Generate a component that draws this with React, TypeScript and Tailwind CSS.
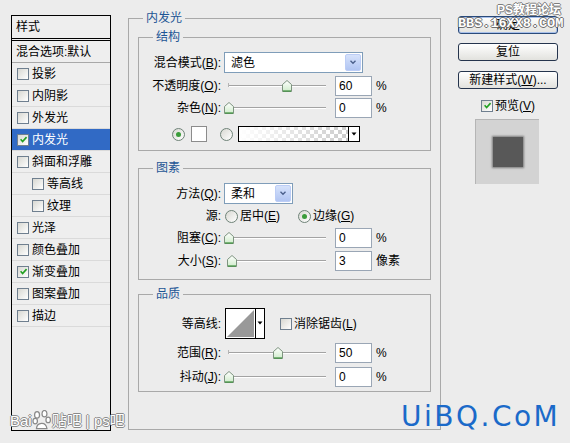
import { FC, ReactNode } from "react";

const ITEMS: { t: string; checked?: boolean; active?: boolean; indent?: boolean }[] = [
  { t: "投影" },
  { t: "内阴影" },
  { t: "外发光" },
  { t: "内发光", checked: true, active: true },
  { t: "斜面和浮雕" },
  { t: "等高线", indent: true },
  { t: "纹理", indent: true },
  { t: "光泽" },
  { t: "颜色叠加" },
  { t: "渐变叠加", checked: true },
  { t: "图案叠加" },
  { t: "描边" },
];

const Check: FC<{ checked?: boolean }> = ({ checked }) => (
  <span className="flex size-[12px] shrink-0 items-center justify-center border border-[#6f7f8f] bg-linear-to-br from-[#d8d8d2] to-white">
    {checked && (
      <svg viewBox="0 0 10 10" className="size-[9px]">
        <path d="M1.8 4.8 L4 7.2 L8.4 2.4" fill="none" stroke="#22a022" strokeWidth="1.8" />
      </svg>
    )}
  </span>
);

const Radio: FC<{ checked?: boolean }> = ({ checked }) => (
  <span className="flex size-[13px] shrink-0 items-center justify-center rounded-full border border-[#6f8378] bg-linear-to-br from-[#d8d8d2] to-white">
    {checked && <span className="size-[5px] rounded-full bg-[#3a9c3a]" />}
  </span>
);

const Chevron = () => (
  <span className="mr-px ml-auto flex h-[17px] w-[16px] items-center justify-center rounded-[2px] border border-[#bccdf6] bg-linear-to-b from-[#d6e2fb] to-[#b1c5f2]">
    <svg viewBox="0 0 8 6" className="h-[5px] w-[8px]">
      <path d="M1 1 L4 4 L7 1" fill="none" stroke="#4a5f8a" strokeWidth="1.6" />
    </svg>
  </span>
);

const Select: FC<{ text: string; w: string }> = ({ text, w }) => (
  <div className={`flex h-[21px] shrink-0 items-center border border-[#7f9db9] bg-white pl-[6px] ${w}`}>
    <span>{text}</span>
    <Chevron />
  </div>
);

const Slider: FC<{ value: number }> = ({ value }) => (
  <div className="relative h-[20px] w-[107px] shrink-0">
    <div className="absolute top-[9px] left-[5px] h-[2px] w-[97px] border-t border-b border-t-[#a3a3a3] border-b-white" />
    <div className="absolute top-[7px] left-[4px] h-[4px] w-px bg-[#b5b5b5]" />
    <svg
      className="absolute top-[4px]"
      style={{ left: Math.round(value * 0.97) }}
      width="10"
      height="12"
      viewBox="0 0 10 12"
    >
      <defs>
        <linearGradient id={`th${value}`} x1="0" y1="0" x2="0" y2="1">
          <stop offset="0" stopColor="#ffffff" />
          <stop offset="1" stopColor="#cfeccb" />
        </linearGradient>
      </defs>
      <path d="M0.5 4.5 L5 0.5 L9.5 4.5 L9.5 11.5 L0.5 11.5 Z" fill={`url(#th${value})`} stroke="#7d947f" />
      <path d="M1 11 H9" stroke="#3d8f3d" strokeWidth="1.2" />
    </svg>
  </div>
);

const NumBox: FC<{ v: string }> = ({ v }) => (
  <div className="ml-[4px] flex h-[20px] w-[37px] shrink-0 items-center border border-[#9aa6b5] bg-white pl-[3px]">
    {v}
  </div>
);

const Label: FC<{ children: ReactNode }> = ({ children }) => (
  <span className="w-[83px] shrink-0 pr-px text-right whitespace-nowrap">{children}</span>
);

const SliderRow: FC<{ label: ReactNode; value: number; unit: string; mt: string }> = ({ label, value, unit, mt }) => (
  <div className={`flex h-[20px] items-center ${mt}`}>
    <Label>{label}</Label>
    <span className="ml-[2px] flex items-center">
      <Slider value={value} />
      <NumBox v={String(value)} />
      <span className="ml-[4px]">{unit}</span>
    </span>
  </div>
);

const Group: FC<{ title: string; mt: string; pb: string; children: ReactNode }> = ({ title, mt, pb, children }) => (
  <fieldset className={`mx-[9px] border border-[#a9a9a9] ${mt} ${pb}`}>
    <legend className="ml-[14px] px-[3px] leading-[16px] text-[#1d5595]">{title}</legend>
    {children}
  </fieldset>
);

const GradientBox = () => (
  <svg width="122" height="16" viewBox="0 0 122 16" className="ml-[5px] shrink-0">
    <defs>
      <pattern id="chk" width="8" height="8" patternUnits="userSpaceOnUse">
        <rect width="8" height="8" fill="#ffffff" />
        <rect width="4" height="4" fill="#cccccc" />
        <rect x="4" y="4" width="4" height="4" fill="#cccccc" />
      </pattern>
      <linearGradient id="fade" x1="0" y1="0" x2="1" y2="0">
        <stop offset="0" stopColor="#ffffff" stopOpacity="1" />
        <stop offset="1" stopColor="#ffffff" stopOpacity="0" />
      </linearGradient>
    </defs>
    <rect x="0.5" y="0.5" width="121" height="15" fill="url(#chk)" />
    <rect x="0.5" y="0.5" width="110" height="15" fill="url(#fade)" />
    <rect x="110.5" y="0.5" width="11" height="15" fill="#ffffff" />
    <rect x="0.5" y="0.5" width="121" height="15" fill="none" stroke="#000" />
    <path d="M110.5 0.5 V15.5" stroke="#000" />
    <path d="M113.5 6.5 H118.5 L116 9.5 Z" fill="#000" />
  </svg>
);

const ContourBox = () => (
  <svg width="40" height="31" viewBox="0 0 40 31" className="ml-[3px] shrink-0">
    <rect x="0.5" y="0.5" width="39" height="30" fill="#ffffff" stroke="#000" />
    <path d="M2 29 L29 2 L29 29 Z" fill="#999999" />
    <path d="M30.5 0.5 V30.5" stroke="#000" />
    <path d="M32.5 13.5 H37.5 L35 16.5 Z" fill="#000" />
  </svg>
);

const Btn: FC<{ children: ReactNode; primary?: boolean; mt: string }> = ({ children, primary, mt }) => (
  <div
    className={`flex h-[18px] w-[100px] items-center justify-center rounded-[3px] border bg-linear-to-b from-white to-[#e2e2de] ${mt} ${
      primary ? "border-[#2a4a7a] shadow-[inset_0_0_0_1px_#a8c0ea]" : "border-[#25344d]"
    }`}
  >
    {children}
  </div>
);

const Paw = () => (
  <svg width="20" height="21" viewBox="0 0 16 17" className="inline-block">
    <g fill="#ffffff" stroke="#8a8a8a" strokeWidth="1">
      <ellipse cx="4" cy="4" rx="2" ry="2.6" />
      <ellipse cx="10" cy="3" rx="2" ry="2.6" />
      <ellipse cx="2.5" cy="9" rx="1.8" ry="2.3" />
      <ellipse cx="13" cy="8" rx="1.8" ry="2.3" />
      <path d="M3.5 15 C4 10 11 9 12 15 Z" />
    </g>
  </svg>
);

export default function App() {
  return (
    <div className="relative flex h-[443px] w-[570px] items-start overflow-hidden bg-[#ececec] font-['Liberation_Sans','Noto_Sans_CJK_SC',sans-serif] text-[12px] leading-[16px] text-black">
      {/* style list */}
      <div className="mt-[15px] ml-[11px] h-[416px] w-[100px] shrink-0 border border-black bg-[#eeeeee]">
        <div className="flex h-[25px] items-center border-b-[3px] border-double border-black pb-px pl-[4px]">样式</div>
        <div className="flex h-[22px] items-center border-b border-[#a8a8a8] pl-[4px] whitespace-nowrap">混合选项:默认</div>
        {ITEMS.map((it) => (
          <div
            key={it.t}
            className={`flex h-[22px] items-center border-b border-[#dadada] ${it.indent ? "pl-[20px]" : "pl-[5px]"} ${
              it.active ? "bg-[#316ac5] text-white" : ""
            }`}
          >
            <Check checked={it.checked} />
            <span className="ml-[3px] whitespace-nowrap">{it.t}</span>
          </div>
        ))}
      </div>

      {/* main options */}
      <fieldset className="mt-[10px] ml-[17px] w-[313px] shrink-0 border border-[#a9a9a9] pb-[37px]">
        <legend className="ml-[14px] px-[3px] leading-[16px] text-[#1d5595]">内发光</legend>

        <Group title="结构" mt="mt-[3px]" pb="pb-[8px]">
          <div className="mt-[7px] flex h-[21px] items-center">
            <Label>
              混合模式(<u>B</u>):
            </Label>
            <span className="ml-[2px]">
              <Select text="滤色" w="w-[139px]" />
            </span>
          </div>
          <SliderRow
            mt="mt-[3px]"
            value={60}
            unit="%"
            label={
              <>
                不透明度(<u>O</u>):
              </>
            }
          />
          <SliderRow
            mt="mt-[2px]"
            value={0}
            unit="%"
            label={
              <>
                杂色(<u>N</u>):
              </>
            }
          />
          <div className="mt-[8px] flex h-[16px] items-center pl-[33px]">
            <Radio checked />
            <span className="ml-[6px] h-[16px] w-[16px] shrink-0 border border-[#8c8c8c] bg-white" />
            <span className="ml-[13px]">
              <Radio />
            </span>
            <GradientBox />
          </div>
        </Group>

        <Group title="图素" mt="mt-[9px]" pb="pb-[8px]">
          <div className="mt-[7px] flex h-[21px] items-center">
            <Label>
              方法(<u>Q</u>):
            </Label>
            <span className="ml-[2px]">
              <Select text="柔和" w="w-[69px]" />
            </span>
          </div>
          <div className="mt-[4px] flex h-[16px] items-center">
            <Label>源:</Label>
            <span className="ml-[3px]">
              <Radio />
            </span>
            <span className="ml-[2px] whitespace-nowrap">
              居中(<u>E</u>)
            </span>
            <span className="ml-[18px]">
              <Radio checked />
            </span>
            <span className="ml-[2px] whitespace-nowrap">
              边缘(<u>G</u>)
            </span>
          </div>
          <SliderRow
            mt="mt-[4px]"
            value={0}
            unit="%"
            label={
              <>
                阻塞(<u>C</u>):
              </>
            }
          />
          <SliderRow
            mt="mt-[3px]"
            value={3}
            unit="像素"
            label={
              <>
                大小(<u>S</u>):
              </>
            }
          />
        </Group>

        <Group title="品质" mt="mt-[6px]" pb="pb-[4px]">
          <div className="mt-[6px] flex h-[31px] items-center">
            <Label>等高线:</Label>
            <ContourBox />
            <span className="ml-[15px]">
              <Check />
            </span>
            <span className="ml-[2px] whitespace-nowrap">
              消除锯齿(<u>L</u>)
            </span>
          </div>
          <SliderRow
            mt="mt-[4px]"
            value={50}
            unit="%"
            label={
              <>
                范围(<u>R</u>):
              </>
            }
          />
          <SliderRow
            mt="mt-[4px]"
            value={0}
            unit="%"
            label={
              <>
                抖动(<u>J</u>):
              </>
            }
          />
        </Group>
      </fieldset>

      {/* buttons and preview */}
      <div className="mt-[16px] ml-[17px] flex w-[100px] shrink-0 flex-col">
        <Btn primary mt="mt-0">
          确定
        </Btn>
        <Btn mt="mt-[9px]">复位</Btn>
        <Btn mt="mt-[10px]">
          新建样式(<u>W</u>)...
        </Btn>
        <div className="mt-[10px] ml-[23px] flex h-[13px] items-center">
          <Check checked />
          <span className="ml-[2px] whitespace-nowrap">
            预览(<u>V</u>)
          </span>
        </div>
        <div className="mt-[7px] ml-[17px] flex h-[65px] w-[64px] items-center justify-center border-t border-l border-[#b5b5b5] bg-[#d3d3d3]">
          <div className="size-[30px] bg-[#585858] shadow-[0_0_2px_1px_#7a7a7a]" />
        </div>
      </div>

      {/* watermarks */}
      <div className="absolute top-[2px] left-[497px] text-[12px] font-bold whitespace-nowrap text-white [text-shadow:1px_0_#7d7d7d,-1px_0_#7d7d7d,0_1px_#7d7d7d,0_-1px_#7d7d7d]">
        PS教程论坛
      </div>
      <div className="absolute top-[16px] left-[458px] font-['Liberation_Mono',monospace] text-[13.5px] font-bold whitespace-nowrap text-white [text-shadow:1px_0_#6d6d6d,-1px_0_#6d6d6d,0_1px_#6d6d6d,0_-1px_#6d6d6d]">
        BBS.16XX8.COM
      </div>
      <div className="absolute top-[410px] left-[10px] flex items-end text-[15px] leading-[20px] whitespace-nowrap text-white [text-shadow:1px_0_#8a8a8a,-1px_0_#8a8a8a,0_1px_#8a8a8a,0_-1px_#8a8a8a]">
        <span>Bai</span>
        <Paw />
        <span>贴吧 | ps吧</span>
      </div>
      <div className="absolute top-[403px] left-[401px] font-['DejaVu_Sans',sans-serif] text-[28px] leading-[28px] tracking-[2.5px] whitespace-nowrap text-[#1b6ac9]">
        UiBQ.CoM
      </div>
    </div>
  );
}
